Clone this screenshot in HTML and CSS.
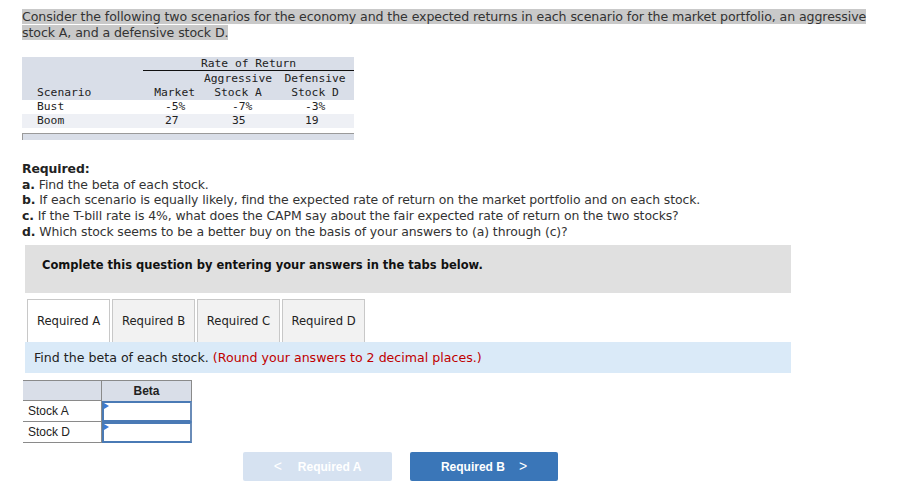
FILE: index.html
```html
<!DOCTYPE html>
<html>
<head>
<meta charset="utf-8">
<link rel="stylesheet" href="styles.css">
</head>
<body>
<div class="page">
  <p class="intro"><span class="hl">Consider the following two scenarios for the economy and the expected returns in each scenario for the market portfolio, an aggressive stock A, and a defensive stock D.</span></p>

  <div class="rtable">
    <div class="rt-head">
      <div class="r1"><span class="c1"></span><span class="rate">Rate of Return</span></div>
      <div class="r2"><span class="c1"></span><span class="c2"></span><span class="c3">Aggressive</span><span class="c4">Defensive</span></div>
      <div class="r3"><span class="c1">Scenario</span><span class="c2 hr">Market</span><span class="c3">Stock A</span><span class="c4">Stock D</span></div>
    </div>
    <div class="rt-row"><span class="c1">Bust</span><span class="c2 v">-5%</span><span class="c3 v">-7%</span><span class="c4 v">-3%</span></div>
    <div class="rt-row alt"><span class="c1">Boom</span><span class="c2 v">27</span><span class="c3 v">35</span><span class="c4 v">19</span></div>
    <div class="rt-foot"></div>
  </div>

  <div class="req">
    <p class="b">Required:</p>
    <p><b>a.</b> Find the beta of each stock.</p>
    <p><b>b.</b> If each scenario is equally likely, find the expected rate of return on the market portfolio and on each stock.</p>
    <p><b>c.</b> If the T-bill rate is 4%, what does the CAPM say about the fair expected rate of return on the two stocks?</p>
    <p><b>d.</b> Which stock seems to be a better buy on the basis of your answers to (a) through (c)?</p>
  </div>

  <div class="complete">Complete this question by entering your answers in the tabs below.</div>

  <div class="tabs">
    <div class="tab active">Required A</div>
    <div class="tab">Required B</div>
    <div class="tab">Required C</div>
    <div class="tab">Required D</div>
  </div>
  <div class="instr">Find the beta of each stock. <span class="red">(Round your answers to 2 decimal places.)</span></div>

  <div class="beta">
    <div class="bh bl"></div><div class="bh">Beta</div>
    <div class="bl">Stock A</div><div class="inp"><span class="tri"></span></div>
    <div class="bl">Stock D</div><div class="inp"><span class="tri"></span></div>
  </div>

  <div class="nav">
    <div class="btn prev"><span class="chev">&lt;</span>Required A</div>
    <div class="btn next">Required B<span class="chev r">&gt;</span></div>
  </div>
</div>
</body>
</html>
```

FILE: styles.css
```css
html, body { margin: 0; padding: 0; background: #fff; }
body { font-family: "DejaVu Sans", Verdana, sans-serif; color: #333; }
.page { padding: 9px 0 0 22px; }
p { margin: 0; }
.intro { width: 850px; font-size: 12.6px; line-height: 16px; letter-spacing: -0.1px; }
.hl { background: #c9c9c9; }

.rtable { margin-top: 16px; width: 332px; font-family: "DejaVu Sans Mono", monospace; font-size: 11.3px; color: #222; }
.rt-head { background: #d9dee8; }
.rt-head > div, .rt-row { display: flex; height: 14px; line-height: 14px; }
.rt-head .r2 { height: 15px; line-height: 15px; }
.c1 { width: 121px; padding-left: 15px; box-sizing: border-box; }
.c2 { width: 57px; box-sizing: border-box; }
.c3 { width: 76px; text-align: center; box-sizing: border-box; }
.c4 { width: 78px; text-align: center; box-sizing: border-box; }
.hr { text-align: right; padding-right: 5px; }
.rate { width: 211px; text-align: center; border-bottom: 1px solid #111; height: 13px; }
.v { text-align: left; }
.c2.v { padding-left: 22px; }
.c3.v { padding-left: 32px; }
.c4.v { padding-left: 29px; }
.rt-row { background: #fff; }
.rt-row.alt { background: #eef0f5; }
.rt-foot { margin-top: 5px; height: 6px; background: #d9dee8; border-top: 1px solid #9a9a9a; border-left: 1px solid #9a9a9a; }

.req { margin-top: 21px; font-size: 12.45px; line-height: 15.7px; color: #333; letter-spacing: -0.1px; }
.req .b { font-weight: bold; color: #222; }
.req b { color: #222; }

.complete { margin: 5px 0 0 3px; width: 766px; height: 48px; box-sizing: border-box; background: #e0e0e0; padding: 12px 0 0 17px; font-family: "DejaVu Sans", sans-serif; font-weight: bold; font-size: 11.5px; line-height: 16px; color: #111; }

.tabs { display: flex; gap: 2px; margin: 6px 0 0 5px; }
.tab { width: 83px; height: 43px; box-sizing: border-box; border: 1px solid #c8c8c8; border-bottom: none; background: #f2f2f2; font-size: 11.6px; line-height: 42px; text-align: center; color: #222; }
.tab.active { background: #fff; }
.instr { margin-left: 3px; width: 766px; height: 31px; box-sizing: border-box; background: #daeaf8; padding-left: 9px; font-size: 12.6px; line-height: 31px; color: #222; }
.red { color: #c00000; }

.beta { display: grid; grid-template-columns: 79px 90px; grid-template-rows: 21px 21px 21px; margin: 7px 0 0 1px; width: 169px; font-family: "Liberation Sans", Arial, sans-serif; font-size: 12px; color: #222; }
.bh { background: #d9dee8; border-top: 1px solid #8a8a8a; border-right: 1px solid #8a8a8a; font-weight: bold; text-align: center; line-height: 20px; }
.bl { border-bottom: 1px solid #8a8a8a; padding-left: 5px; line-height: 20px; }
.bh.bl { padding-left: 0; border-bottom: 1px solid #8a8a8a; border-right: 1px solid #8a8a8a; }
.beta > .bl:not(.bh) { border-right: 1px solid #8a8a8a; }
.inp { position: relative; border: 2px solid #4a7ab5; border-right-color: #6a8cb8; box-sizing: border-box; background: #fff; }
.tri { position: absolute; left: 0; top: 0; width: 0; height: 0; border-top: 3px solid transparent; border-bottom: 3px solid transparent; border-left: 5px solid #3a7bd5; }

.nav { display: flex; gap: 18px; margin: 9px 0 0 221px; font-family: "Liberation Sans", Arial, sans-serif; }
.btn { width: 149px; height: 29px; border-radius: 2px; color: #fff; font-weight: bold; font-size: 12px; line-height: 29px; text-align: center; }
.btn.prev { background: #d6e2f1; }
.btn.next { background: #3a76b8; width: 148px; }
.chev { font-weight: normal; font-size: 14px; margin-right: 16px; }
.chev.r { margin: 0 0 0 14px; }
```
